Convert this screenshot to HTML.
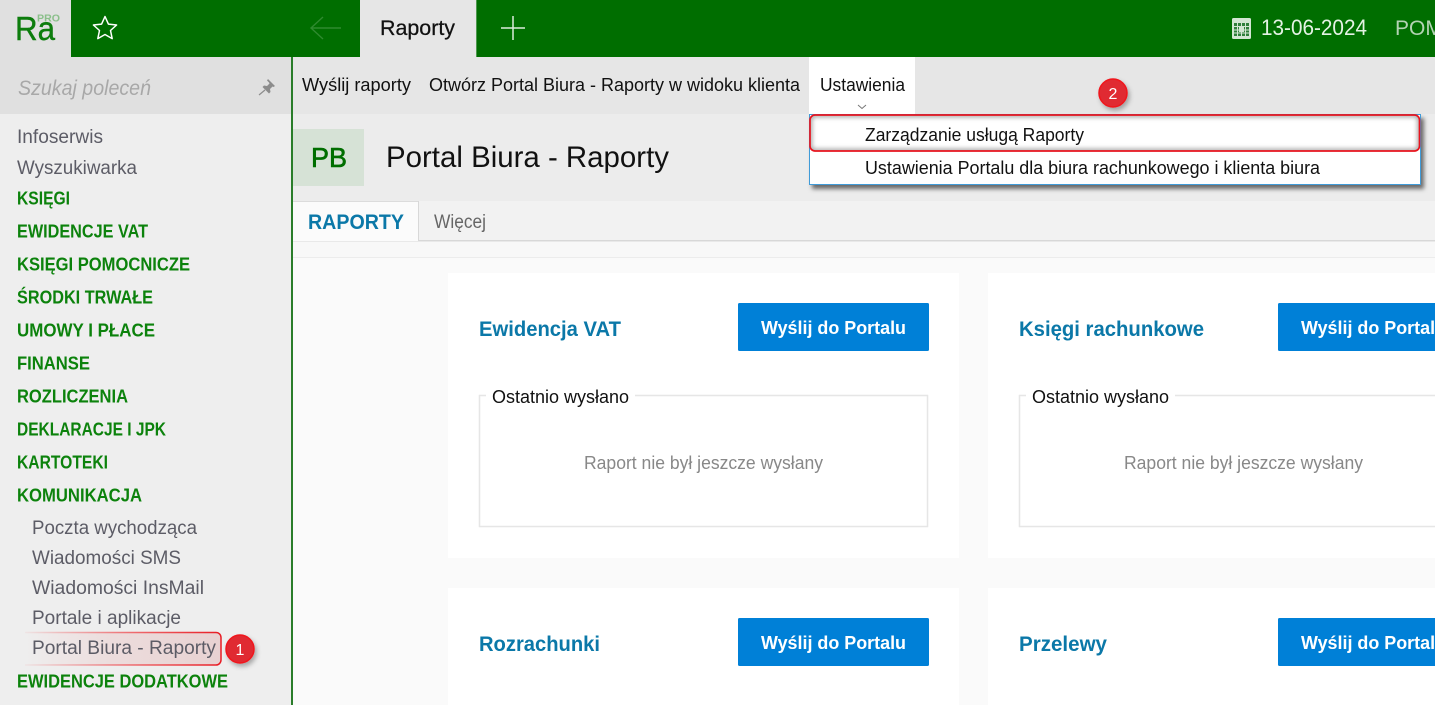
<!DOCTYPE html>
<html lang="pl"><head><meta charset="utf-8"><title>Portal Biura - Raporty</title>
<style>
html,body{margin:0;padding:0;width:1435px;height:705px;overflow:hidden;background:#fafafa}
svg{display:block}
text{font-family:"Liberation Sans",sans-serif;white-space:pre}
.s{font-size:19px;fill:#5c5c66}
.g{font-size:18px;font-weight:bold;fill:#0c820c}
.t{font-size:18px;fill:#111}
.b{font-size:18px;font-weight:bold;fill:#fff}
.h{font-size:21.5px;font-weight:bold;fill:#0b78a8}
.l{font-size:18px;fill:#111}
.p{font-size:18px;fill:#888}
</style></head><body>
<svg width="1435" height="705" viewBox="0 0 1435 705" xmlns="http://www.w3.org/2000/svg">
<defs>
<linearGradient id="hl" x1="0" x2="1" y1="0" y2="0"><stop offset="0" stop-color="#eedcdc" stop-opacity="0"/><stop offset=".45" stop-color="#ecdcdc"/><stop offset="1" stop-color="#e8d2d2"/></linearGradient>
<linearGradient id="hs" x1="0" x2="1" y1="0" y2="0"><stop offset="0" stop-color="#ee2a30" stop-opacity=".05"/><stop offset=".6" stop-color="#ee2a30" stop-opacity=".7"/><stop offset="1" stop-color="#e81c24"/></linearGradient>
<filter id="sh" x="-10%" y="-20%" width="120%" height="160%"><feDropShadow dx="3" dy="4" stdDeviation="2" flood-color="#000" flood-opacity=".55"/></filter>
<filter id="bs" x="-40%" y="-40%" width="190%" height="190%"><feDropShadow dx="2" dy="3" stdDeviation="2.5" flood-color="#000" flood-opacity=".3"/></filter>
<filter id="ib" x="-5%" y="-30%" width="110%" height="160%"><feGaussianBlur stdDeviation="2.5"/></filter>
<clipPath id="ddc"><rect x="810" y="115" width="609.5" height="36" rx="5"/></clipPath>
</defs>

<!-- page regions -->
<rect width="1435" height="705" fill="#fafafa"/>
<rect width="1435" height="57" fill="#006e00"/>
<rect width="71" height="57" fill="#e0e0e0"/>
<rect x="360" width="116" height="57" fill="#e6e6e6"/>
<rect x="476" width="1" height="57" fill="#4d984d"/>

<!-- logo -->
<text x="15" y="40" textLength="40" lengthAdjust="spacingAndGlyphs" style="font-size:33px;fill:#0d7d0d;stroke:#0d7d0d;stroke-width:.4">Ra</text>
<text x="37" y="21.5" textLength="23" lengthAdjust="spacingAndGlyphs" style="font-size:10.5px;font-weight:bold;fill:#8abf8a">PRO</text>
<!-- star -->
<path d="M105 16.5l3.4 7.6 8.2.9-6.1 5.5 1.7 8.1-7.2-4.1-7.2 4.1 1.7-8.1-6.1-5.5 8.2-.9z" fill="none" stroke="#fff" stroke-width="1.5" stroke-linejoin="round"/>
<!-- back arrow -->
<path d="M341 28H311M323 17L311 28L323 39" fill="none" stroke="#2f8a2f" stroke-width="1.4"/>
<text x="380" y="35" textLength="75" lengthAdjust="spacingAndGlyphs" style="font-size:21px;fill:#111;stroke:#111;stroke-width:.25">Raporty</text>
<path d="M513 16V40M501 28H525" stroke="#dcecdc" stroke-width="1.5"/>
<!-- calendar -->
<rect x="1232" y="18" width="19" height="21" rx="1.5" fill="#d3e6d3"/>
<rect x="1234" y="23" width="15" height="13" fill="#2f7f3a"/>
<path d="M1234 26.5h15M1234 30h15M1234 33h15M1237.5 23v13M1241.5 23v13M1245.5 23v13" stroke="#d3e6d3" stroke-width="1"/>
<rect x="1239" y="27" width="5" height="5" fill="#d3e6d3"/>
<text x="1261" y="35" textLength="106" lengthAdjust="spacingAndGlyphs" style="font-size:22.5px;fill:#e4f2e4">13-06-2024</text>
<text x="1395" y="35" style="font-size:21px;fill:#b3d3b3">POM</text>

<!-- sidebar -->
<rect y="57" width="291" height="648" fill="#eeeeee"/>
<rect y="57" width="291" height="57" fill="#e0e0e0"/>
<rect x="291" y="57" width="2" height="648" fill="#2a7d2a"/>
<text x="18" y="95" textLength="133" lengthAdjust="spacingAndGlyphs" style="font-size:21px;font-style:italic;fill:#a8a8a8">Szukaj poleceń</text>
<path d="M268 79L275 86L273.5 87L272.5 86.5L270 89L270.5 92L269 93.5L262.5 87L264 85.5L267 86L269.5 83.5L269 82.5L267 80.5Z" fill="#8c8c8c"/>
<path d="M265 90L259 95" stroke="#8c8c8c" stroke-width="1.2"/>

<text class="s" x="17" y="143" textLength="86" lengthAdjust="spacingAndGlyphs">Infoserwis</text>
<text class="s" x="17" y="174" textLength="120" lengthAdjust="spacingAndGlyphs">Wyszukiwarka</text>
<text class="g" x="17" y="204.500" textLength="53" lengthAdjust="spacingAndGlyphs">KSIĘGI</text>
<text class="g" x="17" y="237.500" textLength="131" lengthAdjust="spacingAndGlyphs">EWIDENCJE VAT</text>
<text class="g" x="17" y="270.500" textLength="173" lengthAdjust="spacingAndGlyphs">KSIĘGI POMOCNICZE</text>
<text class="g" x="17" y="303.500" textLength="136" lengthAdjust="spacingAndGlyphs">ŚRODKI TRWAŁE</text>
<text class="g" x="17" y="336.500" textLength="138" lengthAdjust="spacingAndGlyphs">UMOWY I PŁACE</text>
<text class="g" x="17" y="369.500" textLength="73" lengthAdjust="spacingAndGlyphs">FINANSE</text>
<text class="g" x="17" y="402.500" textLength="111" lengthAdjust="spacingAndGlyphs">ROZLICZENIA</text>
<text class="g" x="17" y="435.500" textLength="149" lengthAdjust="spacingAndGlyphs">DEKLARACJE I JPK</text>
<text class="g" x="17" y="468.500" textLength="91" lengthAdjust="spacingAndGlyphs">KARTOTEKI</text>
<text class="g" x="17" y="501.500" textLength="125" lengthAdjust="spacingAndGlyphs">KOMUNIKACJA</text>
<text class="s" x="32" y="534" textLength="165" lengthAdjust="spacingAndGlyphs">Poczta wychodząca</text>
<text class="s" x="32" y="564" textLength="149" lengthAdjust="spacingAndGlyphs">Wiadomości SMS</text>
<text class="s" x="32" y="594" textLength="172" lengthAdjust="spacingAndGlyphs">Wiadomości InsMail</text>
<text class="s" x="32" y="624" textLength="149" lengthAdjust="spacingAndGlyphs">Portale i aplikacje</text>
<path d="M25 632.5H216a5 5 0 0 1 5 5V660a5 5 0 0 1-5 5H25z" fill="url(#hl)"/>
<path d="M25 632.5H216a5 5 0 0 1 5 5V660a5 5 0 0 1-5 5H25" fill="none" stroke="url(#hs)" stroke-width="1.5"/>
<text class="s" x="32" y="654" textLength="184" lengthAdjust="spacingAndGlyphs">Portal Biura - Raporty</text>
<text class="g" x="17" y="687.500" textLength="211" lengthAdjust="spacingAndGlyphs">EWIDENCJE DODATKOWE</text>
<g filter="url(#bs)"><circle cx="240" cy="649" r="14" fill="#e02a30" stroke="#f0141c" stroke-width="1.5"/></g>
<text x="240" y="655" text-anchor="middle" style="font-size:16px;fill:#fff">1</text>

<!-- toolbar -->
<rect x="293" y="57" width="1142" height="57" fill="#e6e6e6"/>
<rect x="809" y="57" width="106" height="57" fill="#fff"/>
<text class="t" x="302" y="91" textLength="109" lengthAdjust="spacingAndGlyphs">Wyślij raporty</text>
<text class="t" x="429" y="91" textLength="371" lengthAdjust="spacingAndGlyphs">Otwórz Portal Biura - Raporty w widoku klienta</text>
<text class="t" x="820" y="91" textLength="85" lengthAdjust="spacingAndGlyphs">Ustawienia</text>
<path d="M858 105l4 3.5 4-3.5" fill="none" stroke="#777" stroke-width="1"/>

<!-- title row -->
<rect x="293" y="114" width="1142" height="87" fill="#ececec"/>
<rect x="293" y="129" width="71" height="57" fill="#d6e2d6"/>
<text x="311" y="167" textLength="36" lengthAdjust="spacingAndGlyphs" style="font-size:28px;fill:#006e00;stroke:#006e00;stroke-width:.6">PB</text>
<text x="386" y="167" textLength="283" lengthAdjust="spacingAndGlyphs" style="font-size:30px;fill:#111">Portal Biura - Raporty</text>

<!-- tab row -->
<rect x="293" y="201" width="1142" height="40" fill="#f2f2f2"/>
<rect x="293" y="240" width="1142" height="1.500" fill="#d8d8d8"/>
<rect x="293" y="201" width="126" height="40" fill="#fbfbfb"/>
<rect x="293" y="201" width="126" height="1" fill="#dcdcdc"/>
<rect x="418" y="201" width="1" height="40" fill="#d8d8d8"/>
<text x="308" y="229" textLength="96" lengthAdjust="spacingAndGlyphs" style="font-size:21px;font-weight:bold;fill:#0b78a8">RAPORTY</text>
<text x="434" y="228" textLength="52" lengthAdjust="spacingAndGlyphs" style="font-size:19px;fill:#666">Więcej</text>
<rect x="293" y="242" width="1142" height="15" fill="#f8f8f8"/>
<rect x="293" y="257" width="1142" height="1" fill="#ececec"/>

<!-- cards -->
<rect x="448" y="273" width="511" height="285" fill="#fff"/>
<rect x="988" y="273" width="447" height="285" fill="#fff"/>
<rect x="448" y="588" width="511" height="117" fill="#fff"/>
<rect x="988" y="588" width="447" height="117" fill="#fff"/>

<text class="h" x="479" y="336" textLength="142" lengthAdjust="spacingAndGlyphs">Ewidencja VAT</text>
<text class="h" x="1019" y="336" textLength="185" lengthAdjust="spacingAndGlyphs">Księgi rachunkowe</text>
<text class="h" x="479" y="651" textLength="121" lengthAdjust="spacingAndGlyphs">Rozrachunki</text>
<text class="h" x="1019" y="651" textLength="88" lengthAdjust="spacingAndGlyphs">Przelewy</text>

<rect x="738" y="303" width="191" height="48" rx="1.5" fill="#0080d7"/>
<rect x="1278" y="303" width="191" height="48" rx="1.5" fill="#0080d7"/>
<rect x="738" y="618" width="191" height="48" rx="1.5" fill="#0080d7"/>
<rect x="1278" y="618" width="191" height="48" rx="1.5" fill="#0080d7"/>
<text class="b" x="761" y="334" textLength="145" lengthAdjust="spacingAndGlyphs">Wyślij do Portalu</text>
<text class="b" x="1301" y="334" textLength="145" lengthAdjust="spacingAndGlyphs">Wyślij do Portalu</text>
<text class="b" x="761" y="649" textLength="145" lengthAdjust="spacingAndGlyphs">Wyślij do Portalu</text>
<text class="b" x="1301" y="649" textLength="145" lengthAdjust="spacingAndGlyphs">Wyślij do Portalu</text>

<!-- fieldsets -->
<rect x="479.500" y="395.500" width="448" height="131" fill="none" stroke="#e6e6e6" stroke-width="1.5"/>
<rect x="1019.500" y="395.500" width="430" height="131" fill="none" stroke="#e6e6e6" stroke-width="1.5"/>
<rect x="486" y="390" width="149" height="12" fill="#fff"/>
<rect x="1026" y="390" width="149" height="12" fill="#fff"/>
<text class="l" x="492" y="403" textLength="137" lengthAdjust="spacingAndGlyphs">Ostatnio wysłano</text>
<text class="l" x="1032" y="403" textLength="137" lengthAdjust="spacingAndGlyphs">Ostatnio wysłano</text>
<text class="p" x="584" y="469" textLength="239" lengthAdjust="spacingAndGlyphs">Raport nie był jeszcze wysłany</text>
<text class="p" x="1124" y="469" textLength="239" lengthAdjust="spacingAndGlyphs">Raport nie był jeszcze wysłany</text>
<text class="l" x="492" y="720" textLength="137" lengthAdjust="spacingAndGlyphs">Ostatnio wysłano</text>
<text class="l" x="1032" y="720" textLength="137" lengthAdjust="spacingAndGlyphs">Ostatnio wysłano</text>

<!-- dropdown -->
<g filter="url(#sh)"><rect x="809.500" y="114.500" width="611" height="70" fill="#fff" stroke="#3f9bd8" stroke-width="1"/></g>
<g clip-path="url(#ddc)"><rect x="810" y="115" width="609.500" height="36" rx="5" fill="none" stroke="#000" stroke-opacity=".4" stroke-width="4" filter="url(#ib)"/></g>
<rect x="810" y="115" width="609.500" height="36" rx="5" fill="none" stroke="#e8141e" stroke-width="1.7"/>
<text class="t" x="865" y="141" textLength="219" lengthAdjust="spacingAndGlyphs">Zarządzanie usługą Raporty</text>
<text class="t" x="865" y="174" textLength="455" lengthAdjust="spacingAndGlyphs">Ustawienia Portalu dla biura rachunkowego i klienta biura</text>

<g filter="url(#bs)"><circle cx="1113" cy="93" r="14" fill="#e02a30" stroke="#f0141c" stroke-width="1.5"/></g>
<text x="1113" y="99" text-anchor="middle" style="font-size:16px;fill:#fff">2</text>
</svg>
</body></html>
